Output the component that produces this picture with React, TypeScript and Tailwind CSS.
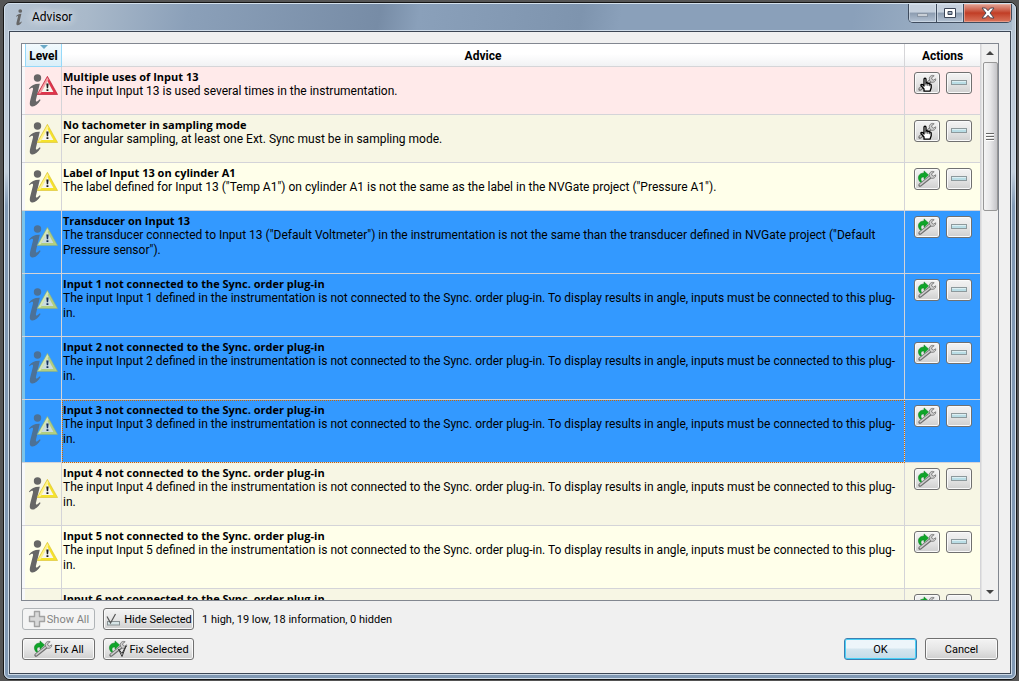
import React from "react";

type Level = "high" | "low";
type Advice = { title: string; text: string; level: Level; fix: "manual" | "auto"; selected?: boolean; current?: boolean; tall?: boolean };

const inputAdvice = (n: number, selected = false, current = false): Advice => ({
  title: `Input ${n} not connected to the Sync. order plug-in`,
  text: `The input Input ${n} defined in the instrumentation is not connected to the Sync. order plug-in. To display results in angle, inputs must be connected to this plug-in.`,
  level: "low",
  fix: "auto",
  selected,
  current,
  tall: true,
});

const advices: Advice[] = [
  { title: "Multiple uses of Input 13", text: "The input Input 13 is used several times in the instrumentation.", level: "high", fix: "manual" },
  { title: "No tachometer in sampling mode", text: "For angular sampling, at least one Ext. Sync must be in sampling mode.", level: "low", fix: "manual" },
  { title: "Label of Input 13 on cylinder A1", text: 'The label defined for Input 13 ("Temp A1") on cylinder A1 is not the same as the label in the NVGate project ("Pressure A1").', level: "low", fix: "auto" },
  {
    title: "Transducer on Input 13",
    text: 'The transducer connected to Input 13 ("Default Voltmeter") in the instrumentation is not the same than the transducer defined in NVGate project ("Default Pressure sensor").',
    level: "low", fix: "auto", selected: true, tall: true,
  },
  inputAdvice(1, true),
  inputAdvice(2, true),
  inputAdvice(3, true, true),
  inputAdvice(4),
  inputAdvice(5),
  inputAdvice(6),
];

function InfoGlyph() {
  return (
    <>
      <circle cx="9.500" cy="4" r="3.700" />
      <path d="M1 14.500C3.500 11.500 6.500 9.500 11.800 9.700L8 25.500C7.500 28 8.500 28.500 11.800 25.200L12.600 26C10 30.500 6.500 33 4 32.500C1.500 32 1.500 29.500 2.200 26.500L5 15.500C5.400 13.500 4 13.200 1.600 15.300Z" />
    </>
  );
}

function LevelIcon({ level, selected }: { level: Level; selected?: boolean }) {
  const high = level === "high";
  const edge = high ? "#e0354c" : selected ? "#b2cf80" : "#f5e22c";
  const shade = high ? "#b3132b" : selected ? "#8aaf84" : "#d8c030";
  const light = high ? "#f4a0a6" : selected ? "#d5e6b4" : "#fff38a";
  return (
    <svg viewBox="0 0 30 34" className="mx-auto block h-[34px] w-[30px]" role="img" aria-label={`${level} level`}>
      <g fill={selected ? "#4c7196" : "#666666"}><InfoGlyph /></g>
      <path d="M9.200 20.500L19.400 2.300L29.600 20.500Z" fill={edge} stroke={shade} strokeWidth="0.600" strokeLinejoin="round" />
      <path d="M10.200 19.700L19.400 3.300L20.500 5.500L12.800 19.300Z" fill={light} />
      <path d="M13.400 17.900L19.400 6.900L25.400 17.900Z" fill={selected ? "#c9dce0" : "#f7f6ee"} />
      <path d="M18.300 9.500h2.300l-.5 4.800h-1.300zM18.500 15.200h1.900v1.800h-1.900z" fill={selected ? "#142f59" : "#1c1c1c"} />
    </svg>
  );
}

function Wrench() {
  return (
    <>
      <path d="M3 15.200L13.500 6.800" stroke="#707070" strokeWidth="3.400" strokeLinecap="round" fill="none" />
      <path d="M3.300 14.700L13.500 6.500" stroke="#cdcdcd" strokeWidth="1.600" strokeLinecap="round" fill="none" />
      <path d="M17.200 1.800C15.200 .8 12.500 1.800 12.300 4.500C12.200 7 14 8.700 16 8.300C17.900 8 18.900 6.600 18.700 4.800L16.300 6.200L14.600 5L15 3.200Z" fill="#d2d2d2" stroke="#707070" strokeWidth=".8" />
    </>
  );
}

function FixIcon({ check = false }: { check?: boolean }) {
  return (
    <svg viewBox="0 0 20 18" className="h-[18px] w-5 shrink-0" aria-hidden="true">
      <Wrench />
      <path d="M3.600 12.200C.2 9.500 .8 4.200 5.200 3.200L7 3V.9L11.600 5L7 9.300V7C4.400 6.900 3 8.800 4.700 11.400Z" fill="#0fa529" stroke="#087a1d" strokeWidth=".5" />
      {check && <path d="M10.500 9L14 16.500L18 6L14 13.500Z" fill="#fff" stroke="#333" strokeWidth="1" />}
    </svg>
  );
}

function ManualIcon() {
  return (
    <svg viewBox="0 0 20 18" className="h-[18px] w-5 shrink-0" aria-hidden="true">
      <Wrench />
      <path d="M7 17.200V15L4 11.500C3.500 10.600 4.700 10 5.500 10.600L7 12V5.200C7 3.900 9 3.900 9 5.200V9.200C9.300 8.500 10.800 8.600 10.900 9.600C11.500 9 12.700 9.300 12.700 10.200C13.400 9.900 14.200 10.300 14.200 11.200V13.700L13 17.200Z" fill="#fff" stroke="#000" strokeWidth="1.300" strokeLinejoin="round" />
      <path d="M9 9.200V11.500M10.900 9.700V11.900M12.700 10.200V12.200" stroke="#000" strokeWidth=".8" />
    </svg>
  );
}

function MinusIcon() {
  return (
    <svg viewBox="0 0 18 8" className="h-2 w-[18px]" aria-hidden="true">
      <rect x="1.500" y="1.500" width="15" height="4" fill="#b9dde5" stroke="#8d999c" />
      <path d="M2 2.500h14" stroke="#dceff3" />
    </svg>
  );
}

function PlusIcon() {
  return (
    <svg viewBox="0 0 18 18" className="h-[18px] w-[18px] shrink-0" aria-hidden="true">
      <path d="M6.500 1.500h5v5h5v5h-5v5h-5v-5H1.500v-5h5z" fill="#d9d9d9" stroke="#a2a2a2" strokeWidth="1.400" strokeLinejoin="round" />
    </svg>
  );
}

function HideIcon() {
  return (
    <svg viewBox="0 0 18 18" className="h-[18px] w-[18px] shrink-0" aria-hidden="true">
      <rect x="2.500" y="11.500" width="12" height="3.500" fill="#d6e4e6" stroke="#899294" />
      <path d="M2 6.500L5.500 13L10.500 4" fill="none" stroke="#555" strokeWidth="1.200" />
    </svg>
  );
}

const face = "rounded-[3px] border border-[#707070] bg-linear-to-b from-[#f3f3f3] via-[#e6e6e6] to-[#cfcfcf] shadow-[inset_0_0_0_1px_#fafafa]";

function ActionButton({ label, children }: { label: string; children: React.ReactNode }) {
  return (
    <button type="button" aria-label={label} className={`flex h-[22px] w-[26px] items-center justify-center ${face}`}>
      {children}
    </button>
  );
}

function AdviceRow({ advice, index }: { advice: Advice; index: number }) {
  const { selected, current, level, tall } = advice;
  const bg = selected ? "bg-[#3399ff]" : level === "high" ? "bg-[#ffeaea]" : index % 2 ? "bg-[#f7f6e4]" : "bg-[#ffffea]";
  const cell = "border-r border-b border-[#d4d4d8] p-0";
  return (
    <tr className={`${tall ? "h-[63px]" : "h-12"} ${bg}`}>
      <td className={`border-b border-[#d4d4d8] p-0 ${selected ? "bg-[#7cc4e8]" : "bg-[#f7f8fa]"}`} />
      <td className={`${cell} align-middle`}><LevelIcon level={level} selected={selected} /></td>
      <td className={`${cell} px-px pt-0.5 align-top ${current ? "outline-1 -outline-offset-1 outline-[#cc6600] outline-dotted" : ""}`}>
        <p className="font-['Open_Sans','Noto_Sans',sans-serif] text-[11px] leading-[15px] font-bold">{advice.title}</p>
        <p>{advice.text}</p>
      </td>
      <td className={`${cell} pt-[5px] align-top`}>
        <div className="flex justify-center gap-1.5">
          <ActionButton label={advice.fix === "auto" ? "Fix" : "Fix manually"}>
            {advice.fix === "auto" ? <FixIcon /> : <ManualIcon />}
          </ActionButton>
          <ActionButton label="Hide"><MinusIcon /></ActionButton>
        </div>
      </td>
    </tr>
  );
}

function ToolButton({ children, className }: { children: React.ReactNode; className: string }) {
  return (
    <button type="button" className={`flex h-[22px] items-center justify-center gap-px whitespace-nowrap ${face} ${className}`}>
      {children}
    </button>
  );
}

function ScrollBar() {
  return (
    <div className="flex w-[17px] shrink-0 flex-col items-center border-l border-[#e2e2e2] bg-[#f0f0f0]" aria-hidden="true">
      <div className="flex h-[18px] items-center"><svg viewBox="0 0 8 4" className="h-1 w-2"><path d="M0 4L4 0L8 4Z" fill="#444" /></svg></div>
      <div className="flex h-[149px] w-[15px] flex-col items-center justify-center gap-px rounded-[2px] border border-[#979797] bg-linear-to-r from-[#f5f5f5] via-[#e6e6e8] to-[#c4c4c8]">
        <i className="h-0.5 w-2 border-b border-white bg-[#666]" />
        <i className="h-0.5 w-2 border-b border-white bg-[#666]" />
        <i className="h-0.5 w-2 border-b border-white bg-[#666]" />
      </div>
      <div className="mt-auto flex h-[17px] items-center"><svg viewBox="0 0 8 4" className="h-1 w-2"><path d="M0 0L4 4L8 0Z" fill="#444" /></svg></div>
    </div>
  );
}

function WindowControls() {
  const glass = "flex items-center justify-center border-r border-[#3f4c5e] bg-linear-to-b from-[#c5d0dd] from-45% via-[#8c9cb0] via-50% to-[#b4c3d4] shadow-[inset_0_0_0_1px_#d8e2ec99]";
  return (
    <div className="flex h-[19px] overflow-hidden rounded-b-[5px] border border-t-0 border-[#3f4c5e]">
      <button type="button" aria-label="Minimize" className={`w-7 ${glass}`}>
        <svg viewBox="0 0 12 5" className="mt-1 h-[5px] w-3"><rect x=".5" y=".5" width="10" height="3" fill="#c9cfd6" stroke="#8995a4" /></svg>
      </button>
      <button type="button" aria-label="Maximize" className={`w-[27px] ${glass}`}>
        <svg viewBox="0 0 12 10" className="h-2.5 w-3"><path fillRule="evenodd" d="M.5 .5h11v9H.5zM4 3.500v3h4v-3z" fill="#fff" stroke="#3c4658" /></svg>
      </button>
      <button type="button" aria-label="Close" className="flex w-[47px] items-center justify-center bg-linear-to-b from-[#e0a396] from-0% via-[#c13d25] via-50% to-[#d9745c] shadow-[inset_0_0_0_1px_#f0b8a899]">
        <svg viewBox="0 0 14 12" className="h-3 w-3.5"><path d="M1 1h3.500L7 3.700L9.500 1H13L9 6L13 11H9.500L7 8.300L4.500 11H1L5 6Z" fill="#fff" stroke="#4c4652" /></svg>
      </button>
    </div>
  );
}

export default function App() {
  const head = "relative border-r border-b border-[#d5d5d8] bg-linear-to-b from-white from-45% to-[#f1f2f4] p-0 pt-0.5 font-bold";
  return (
    <div className="flex h-screen bg-[#555] pt-0.5 pr-0.5 pb-px pl-[3px] font-[Roboto,'Open_Sans',sans-serif] text-[12px] leading-[15px] text-black">
      <div className="flex min-h-0 min-w-0 flex-1 flex-col rounded-[7px] border border-[#151515] bg-linear-to-b from-[#b5c3d2] via-[#c3cfdc] via-25% to-[#8199b4] to-30%">
        <div className="flex min-h-0 min-w-0 flex-1 flex-col rounded-md border border-[#d3e0ec] px-[3px] pb-[3px]">
          <header className="flex h-[26px] shrink-0 items-start justify-between rounded-t bg-linear-[100deg,#b5c3d2,#a9b9ca_8%,#8ba0b9_18%,#778ca6_37%,#8aa0ba_41%,#7e94ae_57%,#8aa0ba_61%,#8aa0ba_84%,#a9bacb]">
            <div className="flex h-[26px] items-center gap-2 pl-1.5">
              <svg viewBox="0 0 14 34" className="h-[17px] w-2.5" fill="#666" aria-hidden="true"><InfoGlyph /></svg>
              <h1 className="[text-shadow:0_0_8px_#fff,0_0_12px_#fff]">Advisor</h1>
            </div>
            <WindowControls />
          </header>
          <div className="flex min-h-0 flex-1 flex-col border border-[#cddae7]">
            <main className="flex min-h-0 flex-1 flex-col border border-[#3c4654] bg-[#f0f0f0] px-[11px] pt-[11px] pb-[13px]">
              <section className="flex min-h-0 flex-1 border border-[#828790] bg-white">
                <div className="min-w-0 flex-1 overflow-hidden">
                  <table className="w-full table-fixed border-separate border-spacing-0">
                    <colgroup>
                      <col className="w-[3px]" /><col className="w-[37px]" /><col /><col className="w-[76px]" />
                    </colgroup>
                    <thead>
                      <tr className="h-[23px]">
                        <td className="border-b border-[#d5d5d8] p-0" />
                        <th className="relative border border-t-0 border-[#96d9f9] bg-linear-to-b from-[#f2fafd] to-[#d9eff9] p-0 pt-0.5 font-bold">
                          Level
                          <svg viewBox="0 0 8 4" className="absolute top-px left-1/2 h-1 w-2 -translate-x-1/2" aria-hidden="true"><path d="M0 0H8L4 4Z" fill="#6aaac8" /></svg>
                        </th>
                        <th className={head}>Advice</th>
                        <th className={head}>Actions</th>
                      </tr>
                    </thead>
                    <tbody>{advices.map((a, i) => <AdviceRow key={a.title} advice={a} index={i} />)}</tbody>
                  </table>
                </div>
                <ScrollBar />
              </section>
              <footer className="flex shrink-0 items-end justify-between px-px pt-[7px] text-[11px]">
                <div className="flex flex-col gap-2">
                  <div className="flex items-center gap-2">
                    <button type="button" disabled className="flex h-[22px] w-[73px] items-center justify-center gap-px rounded-[3px] border border-[#b0b4b7] bg-[#f4f4f4] whitespace-nowrap text-[#838383]">
                      <PlusIcon />Show All
                    </button>
                    <ToolButton className="w-[91px]"><HideIcon />Hide Selected</ToolButton>
                    <p>1 high, 19 low, 18 information, 0 hidden</p>
                  </div>
                  <div className="flex gap-2">
                    <ToolButton className="w-[73px]"><FixIcon />Fix All</ToolButton>
                    <ToolButton className="w-[91px]"><FixIcon check />Fix Selected</ToolButton>
                  </div>
                </div>
                <div className="flex gap-2">
                  <button type="button" className="h-[22px] w-[73px] rounded-[3px] border border-[#3c7fb1] bg-linear-to-b from-[#edf5fa] from-45% via-[#d5e6ef] via-50% to-[#c3dbe8] shadow-[inset_0_0_0_1px_#48d0f7]">OK</button>
                  <ToolButton className="w-[73px]">Cancel</ToolButton>
                </div>
              </footer>
            </main>
          </div>
        </div>
      </div>
    </div>
  );
}
